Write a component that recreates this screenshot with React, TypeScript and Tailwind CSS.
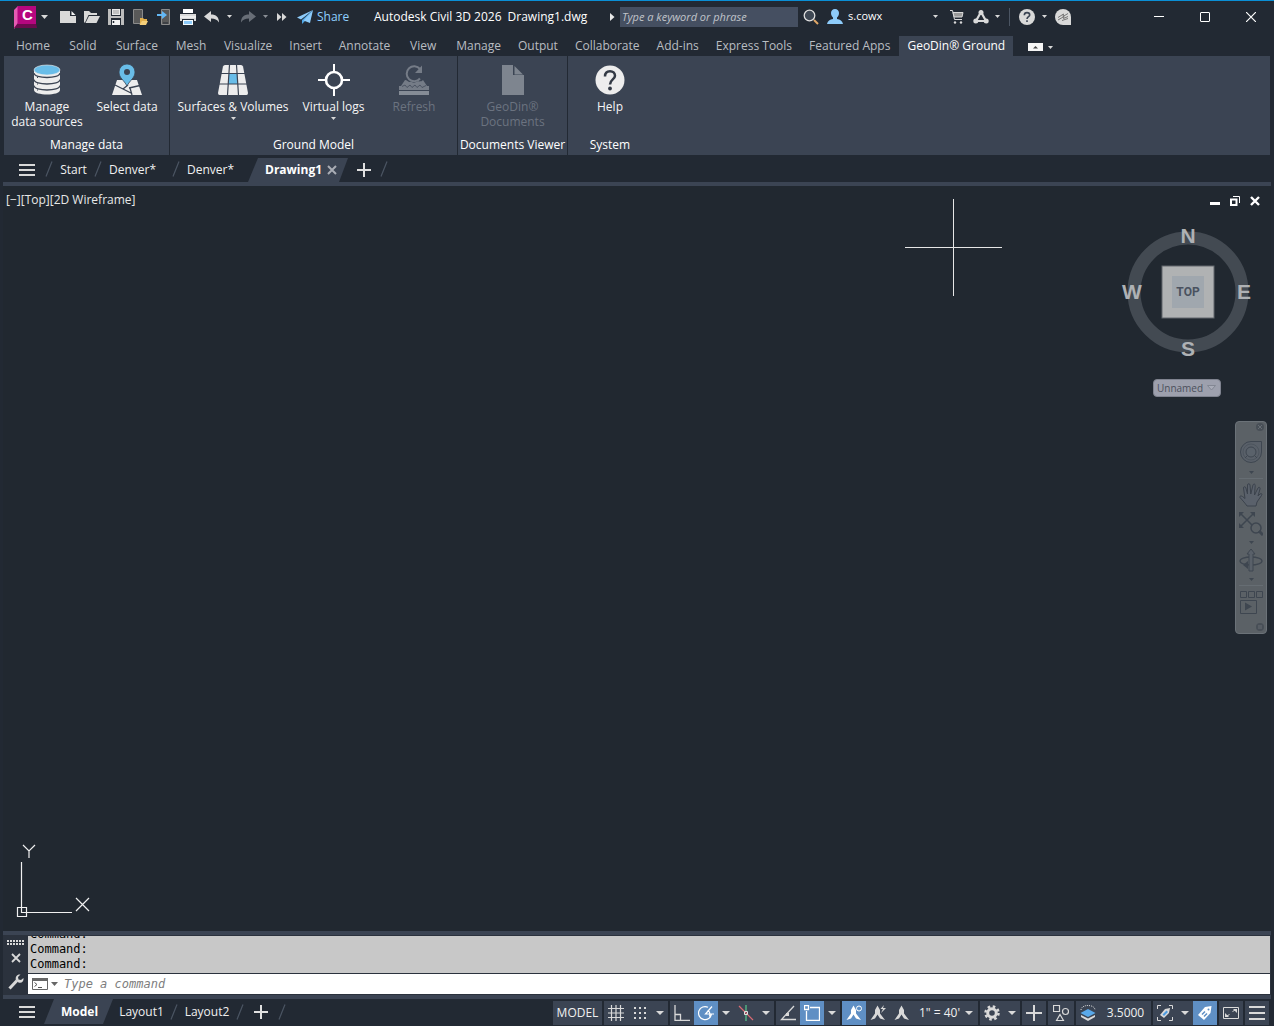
import { useState } from "react";
import type { ReactNode } from "react";

interface IconProps {
  w?: number;
  h?: number;
  children: ReactNode;
  className?: string;
}

function Icon({ w = 16, h = 16, children, className = "" }: IconProps) {
  return (
    <svg
      width={w}
      height={h}
      viewBox={`0 0 ${w} ${h}`}
      fill="none"
      aria-hidden="true"
      className={`shrink-0 ${className}`}
    >
      {children}
    </svg>
  );
}

function Caret({ className = "text-[#d9d9d9]" }: { className?: string }) {
  return (
    <Icon w={7} h={4} className={className}>
      <path d="M0 0h7L3.500 4z" fill="currentColor" />
    </Icon>
  );
}

function SmallCaret({ className = "text-[#d9d9d9]" }: { className?: string }) {
  return (
    <Icon w={5} h={3} className={className}>
      <path d="M0 0h5L2.500 3z" fill="currentColor" />
    </Icon>
  );
}

function Slash() {
  return (
    <Icon w={8} h={16}>
      <path d="M7 0.500L1 15.500" stroke="#4b5563" strokeWidth="1.200" />
    </Icon>
  );
}

/* ---------- title bar ---------- */

const quickTools = [
  {
    name: "New",
    icon: (
      <Icon>
        <path d="M0 2h10v5h6v7H0z" fill="#d9d9d9" />
        <path d="M11.500 2l4 4h-4z" fill="#f5f5f5" />
      </Icon>
    ),
  },
  {
    name: "Open",
    icon: (
      <Icon>
        <path d="M0 2h5l2 2h6v2H4.500L1 13.500H0z" fill="#d9d9d9" />
        <path d="M5 7h11l-3.500 7H1.500z" fill="#d9d9d9" />
      </Icon>
    ),
  },
  {
    name: "Save",
    icon: (
      <Icon>
        <path d="M0 0h16v16H0z" fill="#bdbdbd" />
        <path d="M3 0h10v7H3z" fill="#222933" />
        <path d="M4 0h8v6H4z" fill="#e8e8e8" />
        <path d="M5 2h6M5 4h6" stroke="#999" />
        <path d="M3 9h10v7H3z" fill="#222933" />
        <path d="M4 11h8v5H4z" fill="#f4f4f4" />
        <path d="M5.500 12v2" stroke="#222933" strokeWidth="1.500" />
      </Icon>
    ),
  },
  {
    name: "Open from Web & Mobile",
    icon: (
      <Icon>
        <path d="M1.500 0.500h9v14h-9z" fill="#595959" stroke="#8b8b8b" />
        <path d="M8 9h3l1 1h3v2h-4l-2 3H8z" fill="#e3b04b" />
        <path d="M10 12h6l-2 4H7.500z" fill="#f5cf7b" />
      </Icon>
    ),
  },
  {
    name: "Save to Web & Mobile",
    icon: (
      <Icon>
        <path d="M5.500 0.500h8v15h-8z" fill="#595959" stroke="#8b8b8b" />
        <path d="M7 14h5" stroke="#222933" />
        <path d="M1 5h5V2l5 4-5 4V7H1z" fill="#63b8f5" />
      </Icon>
    ),
  },
  {
    name: "Plot",
    icon: (
      <Icon>
        <path d="M3 0h10v4H3z" fill="#fff" />
        <path d="M0 5h16v7H0z" fill="#d9d9d9" />
        <path d="M0 8h16" stroke="#fff" />
        <path d="M2 10h12v6H2z" fill="#222933" />
        <path d="M3 11h10v5H3z" fill="#f5fbff" />
        <path d="M4 12h8v3H4z" fill="#8dcbfa" />
      </Icon>
    ),
  },
  {
    name: "Undo",
    icon: (
      <Icon>
        <path d="M0 7.500L7 2v3.500c5 0 8 2.500 8 8C13 10.500 11 9.500 7 9.500V13z" fill="#d9d9d9" />
      </Icon>
    ),
  },
];

function TitleBar() {
  return (
    <header className="flex h-8 items-center border-t border-[#0a8fd6] pl-[14px] text-[12px] text-white">
      <button aria-label="Application menu" className="flex items-center">
        <span className="relative flex h-6 w-6">
          <Icon w={24} h={24}>
            <path d="M0 5l4-4v18l-4 5z" fill="#e45bb2" />
            <path d="M4 18h18l1 5H0z" fill="#6b0a4d" />
            <path d="M3.500 1H22v18H3.500z" fill="#b5077f" />
          </Icon>
          <span className="absolute inset-y-0 left-2 font-['Liberation_Sans'] text-[15px] font-bold leading-[20px]">C</span>
        </span>
        <span className="ml-[3px]">
          <Caret />
        </span>
      </button>

      <nav aria-label="Quick access" className="ml-3 flex items-center gap-2">
        {quickTools.map((tool) => (
          <button key={tool.name} aria-label={tool.name}>
            {tool.icon}
          </button>
        ))}
      </nav>
      <button aria-label="Undo history" className="ml-[7px]">
        <SmallCaret />
      </button>
      <button aria-label="Redo" className="ml-2">
        <Icon>
          <path d="M16 7.500L9 2v3.500c-5 0-8 2.500-8 8C3 10.500 5 9.500 9 9.500V13z" fill="#686e77" />
        </Icon>
      </button>
      <button aria-label="Redo history" className="ml-[7px]">
        <SmallCaret className="text-[#8a8f96]" />
      </button>
      <button aria-label="More tools" className="ml-[9px]">
        <Icon w={10} h={10}>
          <path d="M0 1l4.500 4L0 9zM5 1l4.500 4L5 9z" fill="#d9d9d9" />
        </Icon>
      </button>
      <button className="ml-[9px] flex w-[68px] items-center gap-1 text-[#8fd0ff]">
        <Icon w={17} h={16}>
          <path d="M17 1L1 8.500l4 2z" fill="#8dcbfa" />
          <path d="M17 1L6 11v4l2.500-2.500z" fill="#4ea6e6" />
          <path d="M17 1L7.500 11.500 14 14z" fill="#8dcbfa" />
        </Icon>
        Share
      </button>

      <h1 className="flex w-[246px] items-center gap-[6px] whitespace-nowrap pl-[10px]">
        <span>Autodesk Civil 3D 2026</span>
        <span>Drawing1.dwg</span>
      </h1>
      <label htmlFor="keyword" aria-label="Search" className="w-[10px]">
        <Icon w={5} h={8}>
          <path d="M0 0l4.500 4L0 8z" fill="#e8e8e8" />
        </Icon>
      </label>
      <input
        id="keyword"
        type="text"
        placeholder="Type a keyword or phrase"
        className="h-5 w-[178px] bg-[#454f61] px-[2px] text-[11px] italic outline-none placeholder:text-[#c0c4ca]"
      />
      <button aria-label="Run search" className="ml-[5px]">
        <Icon>
          <path d="M11 11l4 4" stroke="#e0a868" strokeWidth="2" />
          <circle cx="6.500" cy="6.500" r="5.300" fill="#3f4854" stroke="#dedede" strokeWidth="1.300" />
        </Icon>
      </button>
      <button className="ml-2 flex items-center gap-[5px] text-[11px]">
        <Icon>
          <path d="M8 0c2.500 0 4 1.800 4 4 0 2-1 4-2 4.500V10c3 .6 5.500 1.800 6 5H0c.5-3.200 3-4.400 6-5V8.500C5 8 4 6 4 4c0-2.200 1.500-4 4-4z" fill="#8dcbfa" />
        </Icon>
        s.cowx
      </button>

      <div className="ml-auto flex items-center">
        <button aria-label="Account menu">
          <SmallCaret />
        </button>
        <button aria-label="App store" className="ml-3">
          <Icon w={14} h={14}>
            <path d="M0 0.500h2.500l2 9H12" stroke="#d9d9d9" />
            <path d="M3 2.500h10l-1 4.500H4.200z" fill="#999" stroke="#d9d9d9" />
            <circle cx="5" cy="12.500" r="1.200" fill="#d9d9d9" />
            <circle cx="11" cy="12.500" r="1.200" fill="#d9d9d9" />
          </Icon>
        </button>
        <button aria-label="Autodesk services" className="ml-[9px] flex items-center gap-[6px]">
          <Icon w={16} h={16}>
            <path d="M8 3L3 12h10z" stroke="#d9d9d9" strokeWidth="2.200" />
            <circle cx="8" cy="3.500" r="2.500" fill="#d9d9d9" />
            <circle cx="2.800" cy="12" r="2.500" fill="#d9d9d9" />
            <circle cx="13.200" cy="12" r="2.500" fill="#d9d9d9" />
          </Icon>
          <SmallCaret />
        </button>
        <span className="mx-[9px] h-[18px] w-px bg-[#4b5563]" />
        <button aria-label="Help" className="flex items-center gap-[7px]">
          <Icon>
            <circle cx="8" cy="8" r="8" fill="#d9d9d9" />
            <path d="M5.300 6.200C5.300 4.500 6.400 3.600 8 3.600s2.700 1 2.700 2.300C10.700 7.600 8 7.800 8 10" stroke="#3b4453" strokeWidth="1.600" />
            <path d="M7.200 11.300h1.600v1.600H7.200z" fill="#3b4453" />
          </Icon>
          <SmallCaret />
        </button>
        <button aria-label="Autodesk Assistant" className="ml-2">
          <Icon>
            <path d="M8 0a8 8 0 018 8v8H8A8 8 0 018 0z" fill="#d9d9d9" />
            <path d="M3 8.500L8.500 5 8 7.500 13 4.500M3 11l6-3.500-.5 2L13 7.500M7 11.500l6-2" stroke="#6a6a6a" strokeWidth="0.900" />
          </Icon>
        </button>
        <div className="ml-[79px] mr-[14px] flex items-center gap-7">
          <button aria-label="Minimize" className="flex h-5 w-[18px] items-center justify-center">
            <Icon w={10} h={10}>
              <path d="M0 4.500h10" stroke="#fff" />
            </Icon>
          </button>
          <button aria-label="Maximize" className="flex h-5 w-[18px] items-center justify-center">
            <Icon w={10} h={10}>
              <rect x="0.500" y="0.500" width="9" height="9" rx="0.500" stroke="#fff" />
            </Icon>
          </button>
          <button aria-label="Close" className="flex h-5 w-[18px] items-center justify-center">
            <Icon w={10} h={10}>
              <path d="M0 0l10 10M10 0L0 10" stroke="#fff" strokeWidth="1.200" />
            </Icon>
          </button>
        </div>
      </div>
    </header>
  );
}

/* ---------- ribbon ---------- */

const ribbonTabs = [
  "Home",
  "Solid",
  "Surface",
  "Mesh",
  "Visualize",
  "Insert",
  "Annotate",
  "View",
  "Manage",
  "Output",
  "Collaborate",
  "Add-ins",
  "Express Tools",
  "Featured Apps",
  "GeoDin® Ground",
];

function RibbonTabs() {
  const [active, setActive] = useState("GeoDin® Ground");

  return (
    <nav aria-label="Ribbon tabs" className="mt-1 flex h-5 items-stretch gap-px pl-2 text-[12px]">
      {ribbonTabs.map((tab) => (
        <button
          key={tab}
          onClick={() => setActive(tab)}
          className={`min-w-12 whitespace-nowrap px-2 leading-5 ${
            tab === active ? "bg-[#3b4453] text-white" : "text-[#b9bdc2]"
          }`}
        >
          {tab}
        </button>
      ))}
      <button aria-label="Minimize ribbon" className="ml-[14px] flex items-center gap-[5px] pt-[2px]">
        <Icon w={15} h={8}>
          <path d="M0 0h15v8H0z" fill="#f5f5f5" />
          <path d="M5 5.500h5L7.500 3z" fill="#444" />
        </Icon>
        <SmallCaret />
      </button>
    </nav>
  );
}

interface RibbonButtonProps {
  label: string;
  icon: ReactNode;
  width: string;
  menu?: boolean;
  disabled?: boolean;
}

function RibbonButton({ label, icon, width, menu, disabled }: RibbonButtonProps) {
  return (
    <button
      disabled={disabled}
      className={`flex flex-col items-center whitespace-pre-line text-center leading-[15px] ${width} ${
        disabled ? "text-[#6b7380]" : "text-[#f5f5f5]"
      }`}
    >
      <span className="mb-[3px] flex h-8 items-center">{icon}</span>
      {label}
      {menu && (
        <span className="mt-[3px]">
          <SmallCaret />
        </span>
      )}
    </button>
  );
}

function RibbonPanel({ title, children, width }: { title: string; children: ReactNode; width: string }) {
  return (
    <section className={`flex flex-col justify-between border-r border-[#222933] pt-2 ${width}`}>
      <div className="flex items-start">{children}</div>
      <h2 className="whitespace-nowrap text-center leading-5 text-white">{title}</h2>
    </section>
  );
}

const databaseIcon = (
  <Icon w={28} h={32}>
    <path d="M1 6v20c0 6 26 6 26 0V6z" fill="#ededed" />
    <path d="M1 9c0 6 26 6 26 0M1 15.500c0 6 26 6 26 0M1 21.500c0 6 26 6 26 0" stroke="#3b4453" strokeWidth="1.300" />
    <ellipse cx="14" cy="6" rx="13" ry="5" fill="#69bde8" stroke="#ededed" strokeWidth="0.600" />
    <path d="M4 13.500h1M4 20h1M4 26h1" stroke="#3b4453" />
  </Icon>
);

const mapPinIcon = (
  <Icon w={32} h={32}>
    <path d="M6 16h20l5 15H1z" fill="#ededed" />
    <path d="M4 21l17 8.500M12 25l5-4M18 24l11-2.500M19 24l2 7" stroke="#3b4453" strokeWidth="1.300" />
    <path d="M16 22c-3-6-8-8-8-14a8 8 0 0116 0c0 6-5 8-8 14z" fill="#69bde8" stroke="#3b4453" strokeWidth="0.800" />
    <circle cx="16" cy="8" r="3" fill="#3b4453" />
  </Icon>
);

const surfaceIcon = (
  <Icon w={32} h={32}>
    <path d="M8 1h16q1.500 0 2 1.500L31 29q0 2-1.500 2h-27Q1 31 1 29L6 2.500Q6.500 1 8 1z" fill="#ededed" />
    <path d="M12 10h8.500l.5 10H11z" fill="#69bde8" />
    <path d="M12.500 1l-2 30M19.500 1l2 30M4 9.500h24M2 20h28" stroke="#3b4453" strokeWidth="1.200" />
  </Icon>
);

const targetIcon = (
  <Icon w={32} h={32}>
    <circle cx="16" cy="16" r="8" stroke="#fff" strokeWidth="2.600" />
    <path d="M16 0v8M16 24v8M0 16h8M24 16h8" stroke="#fff" strokeWidth="2" />
  </Icon>
);

const refreshIcon = (
  <Icon w={32} h={32}>
    <path d="M22 5A7.500 7.500 0 1022 14.500" stroke="#757c87" strokeWidth="2" />
    <path d="M24 1.500V9h-7z" fill="#757c87" />
    <path d="M7 16l-4 6h26l-4-6c-3 3-5 0-7 2-3 2-4-1-6 0-2 0-3-2-5-2z" fill="#757c87" />
    <path d="M1 22h30v4H1z" fill="#757c87" />
    <path d="M4 22.500l3-1.500 2 2.500 3-2.500 2 2.500 3-2.500 2 2.500 3-2.500 2 2.500 4-2" stroke="#3b4453" strokeWidth="0.700" />
    <path d="M1 27h30v4H1z" fill="#858c96" />
    <path d="M1 26.500h30" stroke="#3b4453" />
  </Icon>
);

const documentIcon = (
  <Icon w={24} h={32}>
    <path d="M1 1h11v10h11v20H1z" fill="#7e858f" />
    <path d="M13.500 2l8.500 8.500h-8.500z" fill="#7e858f" />
  </Icon>
);

const helpIcon = (
  <Icon w={30} h={32}>
    <circle cx="15" cy="16" r="14.500" fill="#ededed" />
    <path d="M10 12.500C10 9 12 7.200 15 7.200s5 2 5 4.600C20 15.500 15 15.500 15 20.500" stroke="#333a45" strokeWidth="2.500" />
    <circle cx="15" cy="24.500" r="1.900" fill="#333a45" />
  </Icon>
);

function Ribbon() {
  return (
    <div className="mx-1 flex h-[99px] bg-[#3b4453] text-[12px]">
      <RibbonPanel title="Manage data" width="w-[166px]">
        <RibbonButton label={"Manage\ndata sources"} icon={databaseIcon} width="w-[86px]" />
        <RibbonButton label="Select data" icon={mapPinIcon} width="w-[74px]" />
      </RibbonPanel>
      <RibbonPanel title="Ground Model" width="w-[288px]">
        <RibbonButton label="Surfaces & Volumes" icon={surfaceIcon} width="w-[126px]" menu />
        <RibbonButton label="Virtual logs" icon={targetIcon} width="w-[75px]" menu />
        <RibbonButton label="Refresh" icon={refreshIcon} width="w-[86px]" disabled />
      </RibbonPanel>
      <RibbonPanel title="Documents Viewer" width="w-[110px]">
        <RibbonButton label={"GeoDin®\nDocuments"} icon={documentIcon} width="w-full" disabled />
      </RibbonPanel>
      <section className="flex w-[84px] flex-col justify-between pt-2">
        <RibbonButton label="Help" icon={helpIcon} width="w-full" />
        <h2 className="text-center leading-5 text-white">System</h2>
      </section>
    </div>
  );
}

/* ---------- drawing tabs ---------- */

function MenuLines() {
  return (
    <Icon w={16} h={12}>
      <path d="M0 1h16M0 6h16M0 11h16" stroke="#d9d9d9" strokeWidth="2" />
    </Icon>
  );
}

function Plus() {
  return (
    <Icon w={14} h={14}>
      <path d="M0 7h14M7 0v14" stroke="#e0e0e0" strokeWidth="2" />
    </Icon>
  );
}

function FileTabs() {
  return (
    <nav aria-label="Drawings" className="mx-[3px] flex h-[31px] items-center border-b-4 border-[#3b4453] pl-4 text-[12px] text-[#f0f0f0]">
      <button aria-label="Drawing menu" className="mr-[10px] pt-[3px]">
        <MenuLines />
      </button>
      <Slash />
      <button className="w-[41px] pt-[2px]">Start</button>
      <Slash />
      <button className="w-[70px] pl-[7px] pt-[2px] text-left">Denver*</button>
      <Slash />
      <button className="w-[68px] pl-[7px] pt-[2px] text-left">Denver*</button>
      <div className="flex h-6 w-[100px] items-center gap-2 self-end bg-[#3b4453] pl-[17px] [clip-path:polygon(10px_0,100%_0,calc(100%-9px)_100%,0_100%)]">
        <button className="w-[54px] text-left font-bold text-white">Drawing1</button>
        <button aria-label="Close Drawing1">
          <Icon w={10} h={10}>
            <path d="M1 1l8 8M9 1L1 9" stroke="#a9adb5" strokeWidth="2" />
          </Icon>
        </button>
      </div>
      <button aria-label="New drawing" className="mx-[9px] pt-[2px]">
        <Plus />
      </button>
      <Slash />
    </nav>
  );
}

/* ---------- model space ---------- */

function ViewCube() {
  return (
    <div className="absolute right-[18px] top-[38px] flex flex-col items-center gap-[19px]">
      <svg width="132" height="136" viewBox="0 0 132 136" role="img" aria-label="View cube">
        <circle cx="67" cy="68" r="54" fill="none" stroke="#434a52" strokeWidth="13" />
        <rect x="41" y="42" width="52" height="52" fill="#b0b2b3" stroke="#62676c" />
        <rect x="51" y="52" width="32" height="32" fill="#a0a7ae" />
        <g className="font-['Liberation_Sans'] font-bold" textAnchor="middle">
          <text x="67" y="72" fontSize="12" fill="#4a5260" className="font-['Roboto']">TOP</text>
          <g fontSize="21" fill="#aeb1b4">
            <text x="67" y="19">N</text>
            <text x="123" y="75">E</text>
            <text x="67" y="132">S</text>
            <text x="11" y="75">W</text>
          </g>
        </g>
      </svg>
      <div className="relative">
        <select
          aria-label="Coordinate system"
          className="block h-[18px] w-[68px] appearance-none rounded border border-[#7f838f] bg-[#9da0ad] pl-[3px] text-[10px] leading-none text-[#4c505c]"
        >
          <option>Unnamed</option>
        </select>
        <Icon w={9} h={6} className="pointer-events-none absolute right-[5px] top-[6px]">
          <path d="M0.500 0.500h8L4.500 5z" fill="#a9acb8" stroke="#838793" />
        </Icon>
      </div>
    </div>
  );
}

function NavDown() {
  return <SmallCaret className="text-[#3e4650]" />;
}

function NavigationBar() {
  return (
    <div className="absolute right-1 top-[235px] flex h-[213px] w-8 flex-col items-center rounded border border-[#6b7278] bg-[#5b6166]">
      <button aria-label="Close navigation bar" className="mr-[2px] mt-[1px] self-end">
        <Icon w={8} h={8}>
          <circle cx="4" cy="4" r="4" fill="#484f57" />
          <path d="M2 2l4 4M6 2L2 6" stroke="#666d73" />
        </Icon>
      </button>
      <button aria-label="Steering wheel" className="mt-[10px]">
        <Icon w={22} h={22}>
          <path d="M11 .5h10.500V11A10.500 10.500 0 1111 .5z" fill="#596069" stroke="#3e4650" />
          <circle cx="11" cy="11" r="8" stroke="#4d555e" />
          <circle cx="11" cy="11" r="5" fill="#5a626b" stroke="#3e4650" />
          <path d="M5 17l2.500-2.500M17 17l-2.500-2.500" stroke="#3e4650" />
        </Icon>
      </button>
      <span className="mt-2">
        <NavDown />
      </span>
      <span className="my-1 h-px w-6 bg-[#666d73]" />
      <button aria-label="Pan">
        <Icon w={24} h={24}>
          <path
            d="M8 23c-2-3-4-5-7-8.500-.6-1.500 1-2 2.500-1L6 15.500 4.500 5c0-1.700 2-1.700 2.400 0L8.500 11V2c.2-1.700 2.300-1.700 2.500 0l.8 9L14 2c.5-1.500 2.400-1.200 2.200.5L15.500 12l3.500-7c1-1.500 2.500-.5 2 1l-2 7 2-2c1.500-1 2.500 0 1.500 1.500L18 19l-1 4z"
            fill="#5a616b"
            stroke="#3b424c"
          />
        </Icon>
      </button>
      <button aria-label="Zoom extents" className="mt-[5px]">
        <Icon w={24} h={24}>
          <path d="M1 1l14 14M15 1L1 15" stroke="#3e4650" strokeWidth="1.500" />
          <path d="M0 0h5L0 5zM16 0h-5l5 5zM0 16h5l-5-5z" fill="#3e4650" />
          <circle cx="17" cy="16" r="5" fill="#5b6166" stroke="#3e4650" strokeWidth="1.500" />
          <path d="M20 19l4 4" stroke="#3e4650" strokeWidth="3" />
        </Icon>
      </button>
      <span className="mt-[5px]">
        <NavDown />
      </span>
      <button aria-label="Orbit" className="mt-1">
        <Icon w={24} h={24}>
          <ellipse cx="12" cy="13" rx="11" ry="4" stroke="#3e4650" strokeWidth="1.300" />
          <path d="M12 1l4 5h-2v17h-4V6H8z" fill="#596069" stroke="#3e4650" />
          <path d="M4 17l5-4v8z" fill="#3e4650" />
        </Icon>
      </button>
      <span className="mt-[6px]">
        <NavDown />
      </span>
      <span className="my-1 h-px w-6 bg-[#666d73]" />
      <button aria-label="ShowMotion">
        <Icon w={24} h={24}>
          <path d="M1.500 1.500h6v6h-6zM9.500 1.500h6v6h-6zM17.500 1.500h6v6h-6zM1.500 10.500h16v13h-16z" stroke="#3e4650" />
          <path d="M6 12.500v8l7-4z" fill="#3e4650" />
        </Icon>
      </button>
      <button aria-label="Navigation bar options" className="mb-[2px] mr-[2px] mt-auto self-end">
        <Icon w={8} h={8}>
          <circle cx="4" cy="4" r="4" fill="#484f57" />
          <path d="M2 3h4M2 5h4" stroke="#666d73" />
        </Icon>
      </button>
    </div>
  );
}

function ModelSpace() {
  return (
    <main className="relative mx-[3px] min-h-[480px] flex-1 overflow-hidden bg-[#212830]">
      <p className="pl-[3px] pt-[5px] text-[12px] leading-[18px] text-[#e8e8e8]">[−][Top][2D Wireframe]</p>

      <div className="absolute right-[6px] top-[9px] flex items-center gap-[8px]">
        <button aria-label="Minimize viewport">
          <Icon w={12} h={12}>
            <path d="M1 7h10v3H1z" fill="#fff" />
          </Icon>
        </button>
        <button aria-label="Restore viewport">
          <Icon w={12} h={12}>
            <path d="M4 1.500h6.500V8" stroke="#fff" />
            <path d="M2 4.500h5.500V10H2z" stroke="#fff" strokeWidth="2" />
          </Icon>
        </button>
        <button aria-label="Close viewport" className="mr-1">
          <Icon w={12} h={12}>
            <path d="M2 2l8 8M10 2l-8 8" stroke="#fff" strokeWidth="2.400" />
          </Icon>
        </button>
      </div>

      {/* crosshair */}
      <Icon w={97} h={97} className="absolute right-[269px] top-[13px]">
        <path d="M48.500 0v97M0 48.500h97" stroke="#e6e6e6" />
      </Icon>

      <ViewCube />
      <NavigationBar />

      {/* UCS axes */}
      <Icon w={76} h={76} className="absolute bottom-[11px] left-[12px]">
        <path
          d="M6.500 18v50.500H57M2.500 63.500h9v9h-9zM8 1l6 6 6-6M14 7v7M61 54l13 13M74 54L61 67"
          stroke="#f0f0f0"
          strokeWidth="1.200"
        />
      </Icon>
    </main>
  );
}

/* ---------- command line ---------- */

function CommandLine() {
  return (
    <section
      aria-label="Command line"
      className="mx-[3px] flex h-[68px] border-y-4 border-[#3b4453] bg-[#2b323d] font-['DejaVu_Sans_Mono',monospace] text-[12px]"
    >
      <div className="flex w-[25px] flex-col items-center pt-[5px]">
        <Icon w={17} h={5}>
          <path d="M0 1h17M0 4h17" stroke="#d9d9d9" strokeWidth="2" strokeDasharray="2 1" />
        </Icon>
        <button aria-label="Close command line" className="mt-[8px]">
          <Icon w={10} h={10}>
            <path d="M1 1l8 8M9 1L1 9" stroke="#d9d9d9" strokeWidth="1.800" />
          </Icon>
        </button>
        <button aria-label="Customize" className="mt-[11px]">
          <Icon w={16} h={16}>
            <path d="M1.500 14.500l7.500-8" stroke="#d9d9d9" strokeWidth="3" />
            <path d="M12.500 0.500C9 0 7 3 8 6l2.500 2.500c3 1 5.500-1 5-4.500L13 6l-2.500-.5-.5-2.500z" fill="#d9d9d9" />
          </Icon>
        </button>
      </div>
      <div className="flex min-w-0 flex-1 flex-col py-px pr-px">
        {/* history stays scrolled to its newest lines */}
        <div className="flex h-[37px] flex-col justify-end overflow-hidden bg-[#c8c8c8] pb-px pl-[2px] leading-[15px] text-black">
          <p className="shrink-0">Command:</p>
          <p className="shrink-0">Command:</p>
          <p className="shrink-0">Command:</p>
        </div>
        <div className="mt-px flex flex-1 items-center bg-white pl-1">
          <button aria-label="Recent commands" className="flex items-center gap-[3px]">
            <Icon w={16} h={12}>
              <path d="M0.500 0.500h15v11H.5z" fill="#fff" stroke="#666" />
              <path d="M0 0h16v3H0z" fill="#666" />
              <path d="M2.500 4.500l2.500 2-2.500 2M6 9.500h4" stroke="#555" />
            </Icon>
            <Icon w={7} h={4}>
              <path d="M0 0h7L3.500 4z" fill="#666" />
            </Icon>
          </button>
          <input
            type="text"
            aria-label="Command"
            placeholder="Type a command"
            className="ml-[6px] h-5 min-w-0 flex-1 bg-transparent italic text-black outline-none placeholder:text-[#7d7d7d]"
          />
        </div>
      </div>
    </section>
  );
}

/* ---------- status bar ---------- */

function StatusGroup({ children }: { children: ReactNode }) {
  return <div className="flex h-6 bg-[#3b4453]">{children}</div>;
}

function StatusButton({ label, on, children }: { label: string; on?: boolean; children: ReactNode }) {
  return (
    <button
      aria-label={label}
      aria-pressed={on}
      className={`flex w-6 items-center justify-center ${on ? "bg-[#5f8fc4]" : ""}`}
    >
      {children}
    </button>
  );
}

function StatusMenu({ label }: { label: string }) {
  return (
    <button aria-label={label} className="flex w-4 items-center justify-center">
      <Icon w={8} h={4}>
        <path d="M0 0h8L4 4z" fill="#d9d9d9" />
      </Icon>
    </button>
  );
}

const annoPath = "M7.500 0.500L10 5v3.500l5 6.500-5-1.500-2.500-4-2.500 4L0.500 15 5 8.500V5z";

function StatusTools() {
  return (
    <div className="ml-auto flex items-center gap-[2px] whitespace-nowrap pr-[2px]">
      <StatusGroup>
        <button className="w-[49px]">MODEL</button>
      </StatusGroup>
      <StatusGroup>
        <StatusButton label="Grid" on={false}>
          <Icon>
            <path d="M3.500 0v16M8 0v16M12.500 0v16M0 3.500h16M0 8h16M0 12.500h16" stroke="#d9d9d9" strokeWidth="1.200" />
          </Icon>
        </StatusButton>
        <StatusButton label="Snap">
          <Icon>
            <path d="M2 3h12M2 8h12M2 13h12" stroke="#d9d9d9" strokeWidth="2" strokeDasharray="2 3" />
          </Icon>
        </StatusButton>
        <StatusMenu label="Snap settings" />
      </StatusGroup>
      <StatusGroup>
        <StatusButton label="Ortho">
          <Icon>
            <path d="M1 0v15.500h15M1 9.500h5.500v6" stroke="#d9d9d9" strokeWidth="1.300" />
          </Icon>
        </StatusButton>
        <StatusButton label="Polar tracking" on>
          <Icon>
            <path d="M10 2.300A6.500 6.500 0 1013.500 9M16 9H7.500l6.500-7.500M9.500 5.500c2 .8 3 3 2 6" stroke="#fff" strokeWidth="1.200" />
          </Icon>
        </StatusButton>
        <StatusMenu label="Polar settings" />
        <StatusButton label="Isodraft">
          <Icon>
            <path d="M1 1l14 14" stroke="#d96a73" strokeWidth="1.200" />
            <path d="M8 0v6M8 10v6" stroke="#59c98c" strokeWidth="1.200" />
            <path d="M6.500 6.500h3v3h-3z" stroke="#e0e0e0" />
          </Icon>
        </StatusButton>
        <StatusMenu label="Isodraft settings" />
      </StatusGroup>
      <StatusGroup>
        <StatusButton label="Object snap tracking">
          <Icon>
            <path d="M14 1L1.500 14.500H16" stroke="#d9d9d9" strokeWidth="1.300" />
            <path d="M6 8h3v3H6z" fill="#d9d9d9" />
          </Icon>
        </StatusButton>
        <StatusButton label="Object snap" on>
          <Icon>
            <path d="M0.500 0.500h4v4h-4zM2.500 6v9.500h13v-13H6" stroke="#fff" strokeWidth="1.300" />
          </Icon>
        </StatusButton>
        <StatusMenu label="Object snap settings" />
      </StatusGroup>
      <StatusGroup>
        <StatusButton label="Annotation visibility" on>
          <Icon>
            <path d={annoPath} fill="#fff" />
            <circle cx="13" cy="3.500" r="2.500" fill="#5f8fc4" stroke="#fff" />
          </Icon>
        </StatusButton>
        <StatusButton label="Add scales">
          <Icon>
            <path d={annoPath} fill="#d9d9d9" />
            <path d="M14 0l-3.500 4H13l-2 4 5-5h-3z" fill="#d9d9d9" />
          </Icon>
        </StatusButton>
        <StatusButton label="Annotation">
          <Icon>
            <path d={annoPath} fill="#d9d9d9" />
          </Icon>
        </StatusButton>
        <button className="flex w-16 items-center justify-between pl-[5px] pr-[5px]">
          1" = 40'
          <Icon w={8} h={4}>
            <path d="M0 0h8L4 4z" fill="#d9d9d9" />
          </Icon>
        </button>
      </StatusGroup>
      <StatusGroup>
        <StatusButton label="Workspace">
          <Icon>
            <circle cx="8" cy="8" r="4.300" stroke="#d9d9d9" strokeWidth="3" />
            <circle cx="8" cy="8" r="6.500" stroke="#d9d9d9" strokeWidth="2.500" strokeDasharray="2.550 2.550" />
          </Icon>
        </StatusButton>
        <StatusMenu label="Workspace settings" />
      </StatusGroup>
      <StatusGroup>
        <StatusButton label="Annotation monitor">
          <Icon>
            <path d="M0 8h16M8 0v16" stroke="#d9d9d9" strokeWidth="2" />
          </Icon>
        </StatusButton>
      </StatusGroup>
      <StatusGroup>
        <button aria-label="Isolate objects" className="flex w-[26px] items-center justify-center">
          <Icon>
            <path d="M.5.5h6v6h-6zM7 9.500l3.500 6h-7z" stroke="#d9d9d9" strokeWidth="1.200" />
            <circle cx="12.500" cy="6.500" r="3" stroke="#d9d9d9" strokeWidth="1.200" />
          </Icon>
        </button>
      </StatusGroup>
      <StatusGroup>
        <StatusButton label="Elevation">
          <Icon>
            <path d="M1 10l7 3.500 7-3.500v2l-7 4-7-4z" fill="#d9d9d9" />
            <path d="M0.500 8L8 4l7.500 4L8 12z" fill="#5aa9ea" />
            <path d="M1 5c0-6 14-6 14 0" stroke="#d9d9d9" strokeDasharray="1 1" />
          </Icon>
        </StatusButton>
        <button className="w-[51px] text-center">3.5000</button>
      </StatusGroup>
      <StatusGroup>
        <StatusButton label="Geolocation">
          <Icon>
            <path d="M.5 4V.5H4M12 .5h3.500V4M15.500 12v3.500H12M4 15.500H.5V12" stroke="#d9d9d9" />
            <path d="M13 3l-1 5-5 5-4-3 5-6z" fill="#d9d9d9" />
            <path d="M5.500 9.500l4-4 1.500 1.500-4 4z" fill="#4d9be0" />
          </Icon>
        </StatusButton>
        <StatusMenu label="Geolocation settings" />
        <StatusButton label="Quick properties" on>
          <Icon>
            <path d="M14.500 1l-1 7L7 15l-6-5 7-8z" fill="#fff" />
            <path d="M5 9.500l3-3M7 11.500l3-3" stroke="#5f8fc4" strokeWidth="1.500" />
            <circle cx="11.500" cy="4.500" r="1" fill="#5f8fc4" />
          </Icon>
        </StatusButton>
      </StatusGroup>
      <StatusGroup>
        <StatusButton label="Clean screen">
          <Icon>
            <path d="M.5 2.500h15v11H.5z" stroke="#d9d9d9" />
            <path d="M9.500 6.500L13 4.500M6.500 9.500L3 11.500" stroke="#d9d9d9" />
            <path d="M10 4h4v4zM2 8v4h4z" fill="#d9d9d9" />
          </Icon>
        </StatusButton>
      </StatusGroup>
      <StatusGroup>
        <StatusButton label="Customization">
          <Icon>
            <path d="M0 2h16M0 8h16M0 14h16" stroke="#d9d9d9" strokeWidth="2" />
          </Icon>
        </StatusButton>
      </StatusGroup>
    </div>
  );
}

function StatusBar() {
  return (
    <footer className="mx-[3px] flex h-[27px] items-center pl-4 text-[12px] text-[#f0f0f0]">
      <button aria-label="Layout menu" className="pb-[2px]">
        <MenuLines />
      </button>
      <button className="ml-[9px] h-[25px] w-[69px] self-start bg-[#3b4453] pl-[2px] font-bold text-white [clip-path:polygon(10px_0,100%_0,calc(100%-10px)_100%,0_100%)]">
        Model
      </button>
      <div className="flex items-center pb-[2px]">
        <button className="w-[57px] text-center">Layout1</button>
        <Slash />
        <button className="w-[58px] text-center">Layout2</button>
        <Slash />
        <button aria-label="New layout" className="mx-[10px]">
          <Plus />
        </button>
        <Slash />
      </div>
      <StatusTools />
    </footer>
  );
}

export default function App() {
  return (
    <div className="flex min-h-screen flex-col overflow-hidden bg-[#222933] font-['Open_Sans','Noto_Sans',sans-serif]">
      <TitleBar />
      <RibbonTabs />
      <Ribbon />
      <FileTabs />
      <ModelSpace />
      <CommandLine />
      <StatusBar />
    </div>
  );
}
